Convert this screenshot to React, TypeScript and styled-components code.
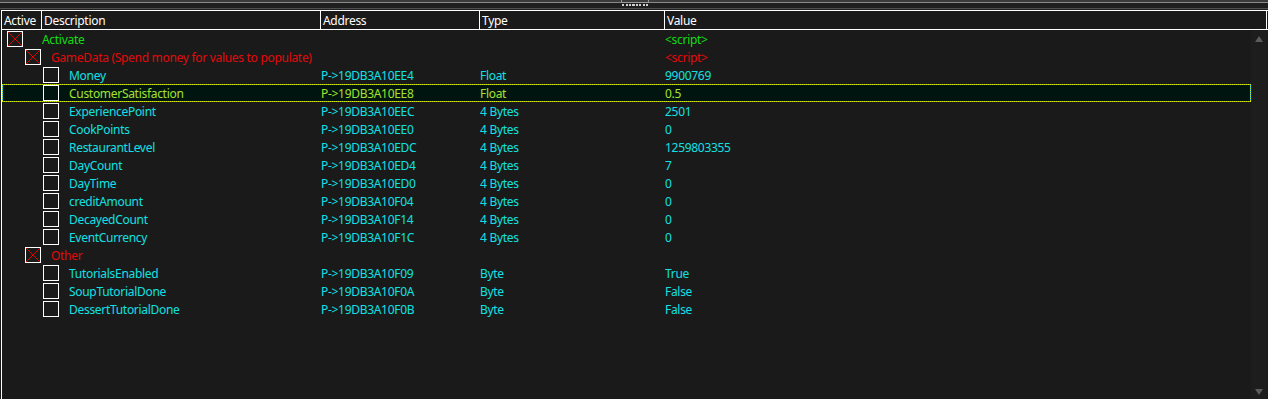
import React from "react";
import styled, { createGlobalStyle } from "styled-components";

const GlobalStyle = createGlobalStyle`
  html, body {
    margin: 0;
    padding: 0;
    background: #1a1a1a;
    overflow: hidden;
  }
  body {
    font-family: "Noto Sans", "Open Sans", sans-serif;
    font-size: 12px;
    letter-spacing: -0.3px;
  }
`;

const Page = styled.div`
  width: 1268px;
  height: 399px;
  display: flex;
  flex-direction: column;
  background: #1a1a1a;
`;

const Splitter = styled.div`
  height: 10px;
  flex: none;
  box-sizing: border-box;
  background: linear-gradient(#3b3b3b 0 2px, #8a8a8a 2px 3px, #1f1f1f 3px 8px, #4f4f4f 8px 9px, #222 9px 10px);
  display: flex;
  justify-content: center;
`;

const Grip = styled.div`
  width: 28px;
  margin-left: 1px;
  height: 3px;
  box-sizing: border-box;
  border: 1px solid #9a9a9a;
  border-top: none;
  position: relative;

  &::after {
    content: "";
    position: absolute;
    left: 0;
    top: 4px;
    width: 28px;
    height: 2px;
    background: repeating-linear-gradient(90deg, #d0d0d0 0 2px, transparent 2px 3.5px);
  }
`;

const Frame = styled.div`
  flex: 1;
  margin-left: 1px;
  width: 1266px;
  border-left: 1px solid #ffffff;
  display: flex;
  flex-direction: column;
  min-height: 0;
`;

const Header = styled.div`
  display: flex;
  height: 20px;
  box-sizing: border-box;
  border-top: 1px solid #ffffff;
  border-bottom: 1px solid #ffffff;
  margin-left: -1px;
  padding-left: 1px;
  flex: none;
`;

const HeaderCell = styled.div<{ $w: number }>`
  width: ${(p) => p.$w}px;
  flex: none;
  box-sizing: border-box;
  border-right: 1px solid #ffffff;
  color: #ffffff;
  line-height: 19px;
  padding-left: 2px;
  white-space: nowrap;
  overflow: hidden;
`;

const Body = styled.div`
  flex: 1;
  display: flex;
  min-height: 0;
`;

const Rows = styled.div`
  width: 1249px;
  flex: none;
`;

const DOTS_H = "repeating-linear-gradient(90deg, #d8f000 0 1px, #10b8f0 1px 2px)";
const DOTS_V = "repeating-linear-gradient(180deg, #d8f000 0 1px, #10b8f0 1px 2px)";

const Row = styled.div<{ $selected?: boolean }>`
  display: grid;
  grid-template-columns: 319px 159px 185px 1fr;
  height: 18px;
  line-height: 19px;
  box-sizing: border-box;
  white-space: nowrap;
  ${(p) =>
    p.$selected &&
    `
    background:
      ${DOTS_H} top / 100% 1px no-repeat,
      ${DOTS_H} bottom / 100% 1px no-repeat,
      ${DOTS_V} left / 1px 100% no-repeat,
      ${DOTS_V} right / 1px 100% no-repeat,
      #001510;
  `}
`;

const TreeCell = styled.div`
  display: flex;
  align-items: center;
  overflow: hidden;
`;

const Box = styled.div<{ $x: number }>`
  width: 16px;
  height: 16px;
  flex: none;
  box-sizing: border-box;
  border: 1px solid #ffffff;
  margin-left: ${(p) => p.$x}px;
  display: flex;
`;

const Label = styled.span<{ $x: number; $color: string }>`
  margin-left: ${(p) => p.$x}px;
  color: ${(p) => p.$color};
`;

const Cell = styled.div<{ $color: string }>`
  color: ${(p) => p.$color};
  overflow: hidden;
`;

const Scrollbar = styled.div`
  width: 16px;
  flex: none;
  background: #1d1d1d;
  display: flex;
  flex-direction: column;
  justify-content: space-between;
  align-items: center;
  padding: 6px 0 4px;
  box-sizing: border-box;
`;

const Arrow = styled.div<{ $down?: boolean }>`
  width: 0;
  height: 0;
  border-left: 4px solid transparent;
  border-right: 4px solid transparent;
  ${(p) =>
    p.$down ? "border-top: 6px solid #5c5c5c;" : "border-bottom: 6px solid #5c5c5c;"}
`;

const Cross = () => (
  <svg width="14" height="14" viewBox="0 0 14 14">
    <path d="M0 0 L14 14 M14 0 L0 14" stroke="#e00000" strokeWidth="1" />
  </svg>
);

type Entry = {
  level: number;
  desc: string;
  address?: string;
  type?: string;
  value: string;
  checked?: boolean;
  color: string;
  selected?: boolean;
};

const CYAN = "#12e0e4";
const GREEN = "#12dc12";
const RED = "#e20a0a";
const SEL = "#a6e22c";

const entries: Entry[] = [
  { level: 0, desc: "Activate", value: "<script>", checked: true, color: GREEN },
  { level: 1, desc: "GameData (Spend money for values to populate)", value: "<script>", checked: true, color: RED },
  { level: 2, desc: "Money", address: "P->19DB3A10EE4", type: "Float", value: "9900769", color: CYAN },
  { level: 2, desc: "CustomerSatisfaction", address: "P->19DB3A10EE8", type: "Float", value: "0.5", color: SEL, selected: true },
  { level: 2, desc: "ExperiencePoint", address: "P->19DB3A10EEC", type: "4 Bytes", value: "2501", color: CYAN },
  { level: 2, desc: "CookPoints", address: "P->19DB3A10EE0", type: "4 Bytes", value: "0", color: CYAN },
  { level: 2, desc: "RestaurantLevel", address: "P->19DB3A10EDC", type: "4 Bytes", value: "1259803355", color: CYAN },
  { level: 2, desc: "DayCount", address: "P->19DB3A10ED4", type: "4 Bytes", value: "7", color: CYAN },
  { level: 2, desc: "DayTime", address: "P->19DB3A10ED0", type: "4 Bytes", value: "0", color: CYAN },
  { level: 2, desc: "creditAmount", address: "P->19DB3A10F04", type: "4 Bytes", value: "0", color: CYAN },
  { level: 2, desc: "DecayedCount", address: "P->19DB3A10F14", type: "4 Bytes", value: "0", color: CYAN },
  { level: 2, desc: "EventCurrency", address: "P->19DB3A10F1C", type: "4 Bytes", value: "0", color: CYAN },
  { level: 1, desc: "Other", value: "", checked: true, color: RED },
  { level: 2, desc: "TutorialsEnabled", address: "P->19DB3A10F09", type: "Byte", value: "True", color: CYAN },
  { level: 2, desc: "SoupTutorialDone", address: "P->19DB3A10F0A", type: "Byte", value: "False", color: CYAN },
  { level: 2, desc: "DessertTutorialDone", address: "P->19DB3A10F0B", type: "Byte", value: "False", color: CYAN },
];

const columns = [
  { name: "Active", w: 40 },
  { name: "Description", w: 279 },
  { name: "Address", w: 159 },
  { name: "Type", w: 185 },
  { name: "Value", w: 602 },
];

export default function App() {
  return (
    <Page>
      <GlobalStyle />
      <Splitter>
        <Grip />
      </Splitter>
      <Frame>
        <Header>
          {columns.map((c) => (
            <HeaderCell key={c.name} $w={c.w}>
              {c.name}
            </HeaderCell>
          ))}
        </Header>
        <Body>
          <Rows>
            {entries.map((e) => {
              const boxX = 5 + e.level * 18;
              const textX = Math.max(40, boxX + 26) - boxX - 16;
              return (
                <Row key={e.desc} $selected={e.selected}>
                  <TreeCell>
                    <Box $x={boxX}>{e.checked && <Cross />}</Box>
                    <Label $x={textX} $color={e.color}>
                      {e.desc}
                    </Label>
                  </TreeCell>
                  <Cell $color={e.color}>{e.address}</Cell>
                  <Cell $color={e.color}>{e.type}</Cell>
                  <Cell $color={e.color}>{e.value}</Cell>
                </Row>
              );
            })}
          </Rows>
          <Scrollbar>
            <Arrow />
            <Arrow $down />
          </Scrollbar>
        </Body>
      </Frame>
    </Page>
  );
}
